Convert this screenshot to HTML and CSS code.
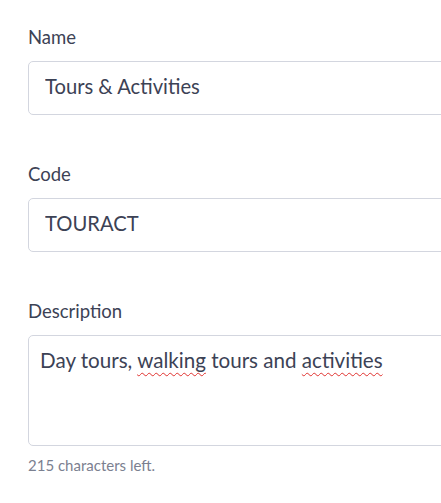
FILE: index.html
```html
<!DOCTYPE html>
<html lang="en">
<head>
  <meta charset="UTF-8" />
  <title>Category</title>
  <link rel="stylesheet" href="styles.css">
</head>
<body>
  <form class="form">
    <div class="field">
      <label class="field-label" for="name">Name</label>
      <input class="field-input" id="name" type="text" value="Tours &amp; Activities">
    </div>

    <div class="field">
      <label class="field-label" for="code">Code</label>
      <input class="field-input" id="code" type="text" value="TOURACT">
    </div>

    <div class="field">
      <label class="field-label" for="description">Description</label>
      <div class="field-textarea" id="description" role="textbox" aria-multiline="true">Day tours, <span class="misspelled">walking</span> tours and <span class="misspelled">activities</span></div>
      <p class="field-help">215 characters left.</p>
    </div>
  </form>
</body>
</html>
```

FILE: styles.css
```css
* {
  box-sizing: border-box;
  margin: 0;
  padding: 0;
}

html, body {
  overflow: hidden;
}

body {
  background: #fff;
  font-family: 'Lato', 'Open Sans', sans-serif;
  color: #3c4255;
  padding: 24px 0 0 28px;
}

.form {
  width: 520px;
}

.field {
  margin-bottom: 46px;
}

.field-label {
  display: block;
  font-size: 18.5px;
  line-height: 26px;
  margin-bottom: 11px;
  color: #3c4255;
}

.field-input {
  display: block;
  width: 100%;
  height: 54px;
  padding: 0 16px 4px;
  border: 1px solid #d3d6df;
  border-radius: 5px;
  font-family: inherit;
  font-size: 20.2px;
  color: #3c4255;
  background: #fff;
  outline: none;
}

.field-textarea {
  height: 111px;
  padding: 9px 11px;
  border: 1px solid #d3d6df;
  border-radius: 5px;
  font-size: 20.6px;
  line-height: 30px;
  color: #3c4255;
}

.misspelled {
  text-decoration: underline wavy #e0322f;
  text-decoration-thickness: 1px;
  text-underline-offset: 4px;
}

.field-help {
  margin-top: 10px;
  font-size: 15px;
  color: #7b8090;
}
```
